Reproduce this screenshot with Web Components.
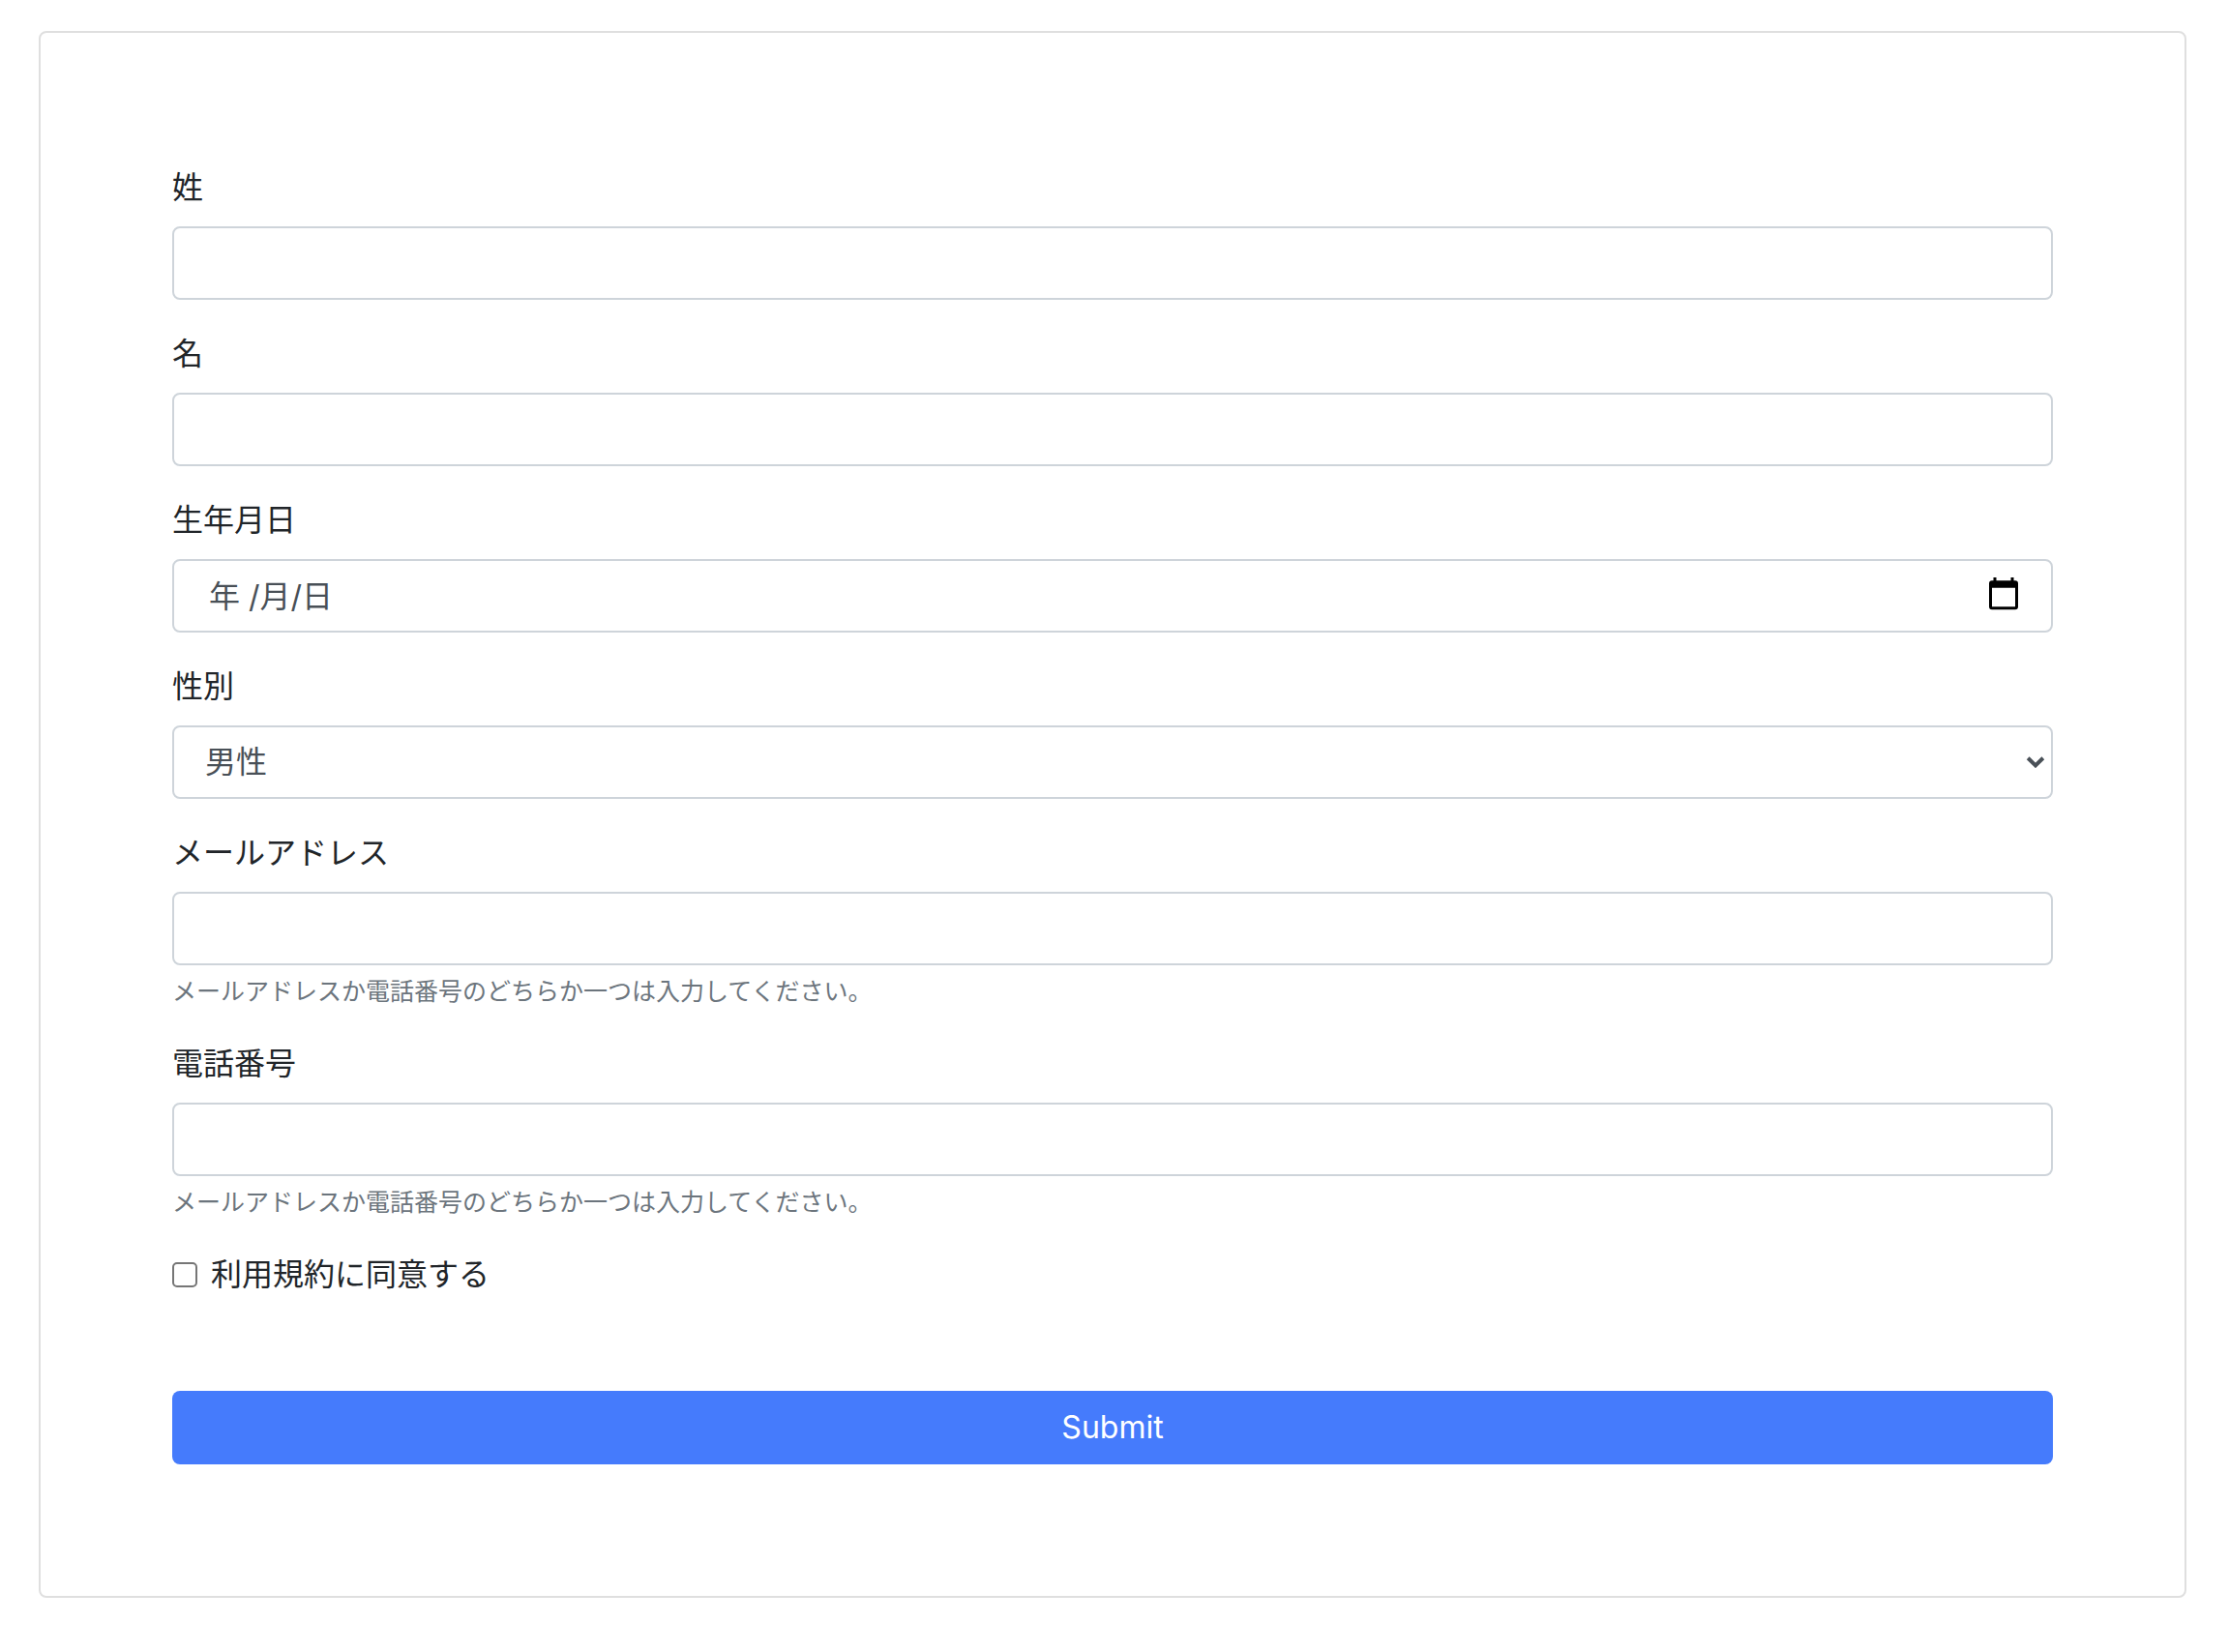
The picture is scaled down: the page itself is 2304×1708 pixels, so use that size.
<!DOCTYPE html>
<html lang="ja">
<head>
  <meta charset="UTF-8">
  <meta name="viewport" content="width=device-width, initial-scale=1">
  <title>登録フォーム</title>
  <style>
    body {
      margin: 0;
      padding: 32px 44px 32px 40px;
      background-color: #fff;
      color: #212529;
      font-family: Inter, "Noto Sans CJK JP", sans-serif;
      font-size: 32px;
      line-height: 48px;
    }
  </style>
</head>
<body>
  <form-card>
    <text-field label="姓" name="last-name"></text-field>
    <text-field label="名" name="first-name"></text-field>
    <date-field label="生年月日" name="birthday" placeholder="年 /月/日"></date-field>
    <select-field label="性別" name="gender" options="男性,女性"></select-field>
    <text-field label="メールアドレス" name="email" type="email">メールアドレスか電話番号のどちらか一つは入力してください。</text-field>
    <text-field label="電話番号" name="tel" type="tel">メールアドレスか電話番号のどちらか一つは入力してください。</text-field>
    <check-field name="agree">利用規約に同意する</check-field>
    <submit-button slot="action">Submit</submit-button>
  </form-card>

  <script>
    const fieldStyles = `
      :host {
        display: block;
      }
      label {
        display: block;
        margin-bottom: 16px;
      }
      .control {
        display: grid;
        align-items: center;
      }
      .control > * {
        grid-area: 1 / 1;
      }
      input,
      select {
        box-sizing: border-box;
        width: 100%;
        height: 76px;
        margin: 0;
        padding: 12px 32px;
        border: 2px solid #ced4da;
        border-radius: 8px;
        background-color: #fff;
        color: #495057;
        font: inherit;
        appearance: none;
      }
      input:focus,
      select:focus {
        border-color: #80bdff;
        outline: none;
      }
      input::placeholder {
        color: #495057;
        opacity: 1;
      }
      svg {
        display: block;
      }
    `;

    class FormCard extends HTMLElement {
      constructor() {
        super();
        const shadow = this.attachShadow({ mode: 'open' });
        shadow.innerHTML = `
          <style>
            :host {
              display: block;
              padding: 136px;
              border: 2px solid #dfdfdf;
              border-radius: 8px;
            }
            .fields {
              display: flex;
              flex-direction: column;
              gap: 32px;
              margin-bottom: 96px;
            }
          </style>
          <div class="fields"><slot></slot></div>
          <slot name="action"></slot>
        `;
      }
    }

    class TextField extends HTMLElement {
      constructor() {
        super();
        const shadow = this.attachShadow({ mode: 'open' });
        shadow.innerHTML = `
          <style>
            ${fieldStyles}
            small {
              display: block;
              margin-top: 8px;
              color: #6c757d;
              font-size: 25px;
              line-height: 38px;
            }
            small[hidden] {
              display: none;
            }
          </style>
          <label for="input"></label>
          <div class="control"><input id="input"></div>
          <small id="help"><slot></slot></small>
        `;
      }

      connectedCallback() {
        const shadow = this.shadowRoot;
        const input = shadow.getElementById('input');
        const help = shadow.getElementById('help');

        shadow.querySelector('label').textContent = this.getAttribute('label') || '';
        input.type = this.getAttribute('type') || 'text';
        input.name = this.getAttribute('name') || '';

        if (this.textContent.trim()) {
          input.setAttribute('aria-describedby', 'help');
        } else {
          help.hidden = true;
        }
      }
    }

    class DateField extends HTMLElement {
      constructor() {
        super();
        const shadow = this.attachShadow({ mode: 'open' });
        shadow.innerHTML = `
          <style>
            ${fieldStyles}
            input {
              padding: 12px 36px;
            }
            button {
              justify-self: end;
              margin: 0 36px 0 0;
              padding: 0;
              border: none;
              background: none;
              color: #000;
              cursor: pointer;
            }
          </style>
          <label for="input"></label>
          <div class="control">
            <input id="input" type="text" inputmode="numeric">
            <button type="button" aria-label="カレンダーを開く">
              <svg width="30" height="38" viewBox="0 0 30 38" fill="currentColor" aria-hidden="true">
                <path fill-rule="evenodd" d="M4.5 0h3v3.3h15V0h3v3.3H27a3 3 0 0 1 3 3v24a3 3 0 0 1-3 3H3a3 3 0 0 1-3-3v-24a3 3 0 0 1 3-3h1.5zM3 10.8v19.4h24V10.8z"/>
              </svg>
            </button>
          </div>
        `;
      }

      connectedCallback() {
        const shadow = this.shadowRoot;
        const input = shadow.getElementById('input');

        shadow.querySelector('label').textContent = this.getAttribute('label') || '';
        input.name = this.getAttribute('name') || '';
        input.placeholder = this.getAttribute('placeholder') || '';
        shadow.querySelector('button').onclick = () => input.focus();
      }
    }

    class SelectField extends HTMLElement {
      constructor() {
        super();
        const shadow = this.attachShadow({ mode: 'open' });
        shadow.innerHTML = `
          <style>
            ${fieldStyles}
            svg {
              justify-self: end;
              margin-right: 8px;
              color: #495057;
              pointer-events: none;
            }
          </style>
          <label for="select"></label>
          <div class="control">
            <select id="select"></select>
            <svg width="20" height="12" viewBox="0 0 20 12" fill="none" stroke="currentColor" stroke-width="4" aria-hidden="true">
              <path d="M2.2 1.8l7.8 7.6 7.8-7.6"/>
            </svg>
          </div>
        `;
      }

      connectedCallback() {
        const shadow = this.shadowRoot;
        const select = shadow.getElementById('select');

        shadow.querySelector('label').textContent = this.getAttribute('label') || '';
        select.name = this.getAttribute('name') || '';
        (this.getAttribute('options') || '').split(',').forEach((text) => {
          select.add(new Option(text));
        });
      }
    }

    class CheckField extends HTMLElement {
      constructor() {
        super();
        const shadow = this.attachShadow({ mode: 'open' });
        shadow.innerHTML = `
          <style>
            :host {
              display: flex;
              align-items: center;
              gap: 14px;
            }
            input {
              width: 26px;
              height: 26px;
              margin: 0;
              box-sizing: border-box;
              border: 2px solid #767676;
              border-radius: 5px;
              background-color: #fff;
              appearance: none;
            }
            input:checked {
              border-color: #457bfc;
              background-color: #457bfc;
            }
          </style>
          <input id="check" type="checkbox">
          <label for="check"><slot></slot></label>
        `;
      }

      connectedCallback() {
        this.shadowRoot.getElementById('check').name = this.getAttribute('name') || '';
      }
    }

    class SubmitButton extends HTMLElement {
      constructor() {
        super();
        const shadow = this.attachShadow({ mode: 'open' });
        shadow.innerHTML = `
          <style>
            :host {
              display: block;
            }
            button {
              display: block;
              width: 100%;
              padding: 14px 24px;
              border: none;
              border-radius: 8px;
              background-color: #457bfc;
              color: #fff;
              font: inherit;
              cursor: pointer;
            }
            button:hover {
              background-color: #2f68ee;
            }
          </style>
          <button type="submit"><slot></slot></button>
        `;
      }
    }

    customElements.define('form-card', FormCard);
    customElements.define('text-field', TextField);
    customElements.define('date-field', DateField);
    customElements.define('select-field', SelectField);
    customElements.define('check-field', CheckField);
    customElements.define('submit-button', SubmitButton);
  </script>
</body>
</html>
